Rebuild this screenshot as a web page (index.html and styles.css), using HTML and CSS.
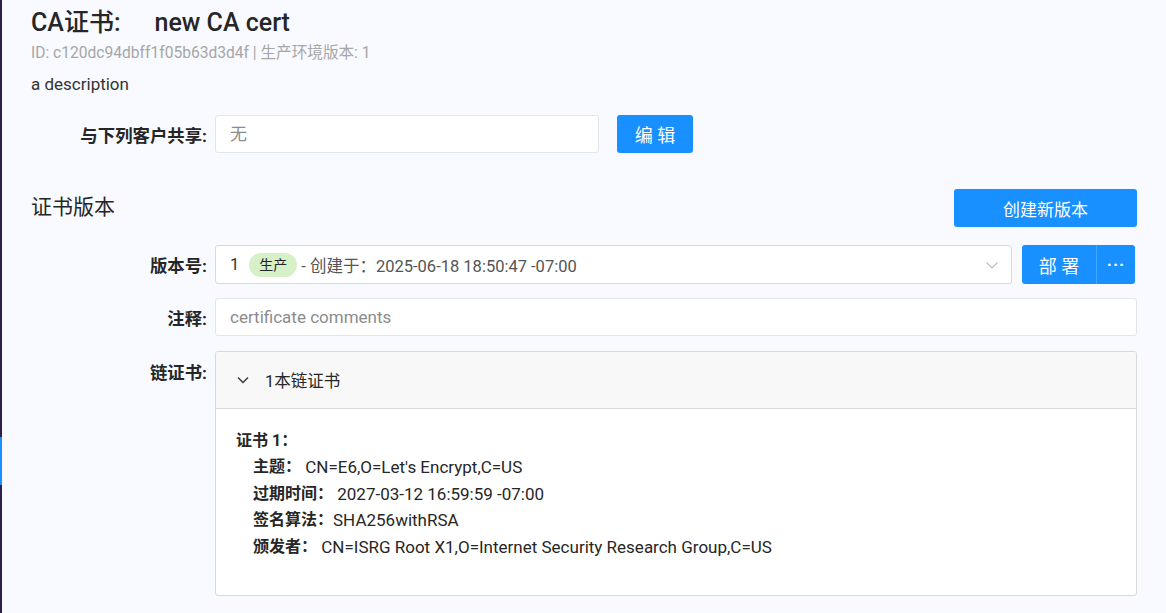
FILE: index.html
```html
<!DOCTYPE html>
<html lang="zh">
<head>
<meta charset="utf-8">
<link rel="stylesheet" href="styles.css">
</head>
<body>
<div class="app">
  <div class="rail">
    <div class="rail-gap"></div>
    <div class="rail-active"></div>
  </div>
  <main class="main">
    <h1 class="title">CA证书:<span class="title-name">new CA cert</span></h1>
    <div class="meta">ID: c120dc94dbff1f05b63d3d4f | 生产环境版本: 1</div>
    <div class="desc">a description</div>

    <div class="row row-share">
      <label class="label">与下列客户共享:</label>
      <div class="input share-input">无</div>
      <button class="btn btn-edit">编 辑</button>
    </div>

    <div class="section-head">
      <h2 class="section-title">证书版本</h2>
      <button class="btn btn-create">创建新版本</button>
    </div>

    <div class="row row-version">
      <label class="label">版本号:</label>
      <div class="select">
        <span class="ver">1</span>
        <span class="tag">生产</span>
        <span class="ver-text">- 创建于：2025-06-18 18:50:47 -07:00</span>
        <svg class="select-arrow" width="14" height="14" viewBox="0 0 14 14"><path d="M1.5 4.5 L7 10 L12.5 4.5" fill="none" stroke="#bfbfbf" stroke-width="1.2"/></svg>
      </div>
      <div class="btn-group">
        <button class="btn btn-deploy">部 署</button>
        <button class="btn btn-more">···</button>
      </div>
    </div>

    <div class="row row-comment">
      <label class="label">注释:</label>
      <div class="input comment-input">certificate comments</div>
    </div>

    <div class="row row-chain">
      <label class="label label-top">链证书:</label>
      <div class="panel">
        <div class="panel-head">
          <svg class="panel-arrow" width="12" height="12" viewBox="0 0 12 12"><path d="M1 3.5 L6 8.5 L11 3.5" fill="none" stroke="#333" stroke-width="1.3"/></svg>
          <span>1本链证书</span>
        </div>
        <div class="panel-body">
          <div class="cert-title">证书 1：</div>
          <div class="cert-line"><b>主题：</b> CN=E6,O=Let's Encrypt,C=US</div>
          <div class="cert-line"><b>过期时间：</b> 2027-03-12 16:59:59 -07:00</div>
          <div class="cert-line"><b>签名算法：</b>SHA256withRSA</div>
          <div class="cert-line"><b>颁发者：</b> CN=ISRG Root X1,O=Internet Security Research Group,C=US</div>
        </div>
      </div>
    </div>
  </main>
</div>
</body>
</html>
```

FILE: styles.css
```css
* { box-sizing: border-box; }
html, body { margin: 0; padding: 0; }
body {
  background: #f8faff;
  font-family: Roboto, "Noto Sans CJK SC", sans-serif;
  color: #333;
  width: 1166px;
  height: 613px;
  overflow: hidden;
}
.app { display: flex; height: 613px; }
.rail {
  width: 2px;
  flex: none;
  background: #2d2049;
  display: flex;
  flex-direction: column;
}
.rail-gap { height: 437px; }
.rail-active { height: 48px; background: #1890ff; }

.main {
  flex: 1;
  padding: 6px 29px 0 29px;
}
.title {
  margin: 0;
  font-size: 25px;
  font-weight: 500;
  line-height: 34px;
  color: #262626;
}
.title-name { margin-left: 34px; }
.meta {
  margin-top: 2px;
  font-size: 15.6px;
  line-height: 22px;
  color: #a6a6a6;
}
.desc {
  margin-top: 9px;
  font-size: 17px;
  line-height: 22px;
  color: #333;
}

.row { display: flex; align-items: center; }
.label {
  width: 184px;
  flex: none;
  text-align: right;
  padding-right: 8px;
  font-size: 17.4px;
  font-weight: 700;
  color: #262626;
}
.input {
  background: #fff;
  border: 1px solid #e3e5ea;
  border-radius: 3px;
  height: 38px;
  line-height: 36px;
  padding: 0 14px;
  font-size: 17px;
  color: #8c8c8c;
}
.row-share { margin-top: 20px; }
.share-input { width: 384px; }

.btn {
  font-family: Roboto, "Noto Sans CJK SC", sans-serif;
  background: #1890ff;
  color: #fff;
  border: none;
  border-radius: 3px;
  font-size: 18px;
  cursor: pointer;
}
.btn-edit {
  margin-left: 18px;
  width: 76px;
  height: 38px;
}

.section-head {
  display: flex;
  justify-content: space-between;
  align-items: center;
  margin-top: 36px;
}
.section-title {
  margin: 0 0 6px 0;
  font-size: 21px;
  font-weight: 400;
  color: #262626;
}
.btn-create {
  width: 183px;
  height: 38px;
  font-size: 17px;
}

.row-version { margin-top: 18px; }
.select {
  width: 797px;
  height: 39px;
  background: #fff;
  border: 1px solid #d9d9d9;
  border-radius: 3px;
  display: flex;
  align-items: center;
  padding: 0 0 0 14px;
  font-size: 16.5px;
  color: #555;
}
.ver { color: #333; }
.tag {
  margin-left: 10px;
  background: #d6f0c8;
  border-radius: 12px;
  height: 24px;
  line-height: 24px;
  padding: 0 10px;
  font-size: 14px;
  color: #262626;
}
.ver-text { margin-left: 4px; }
.select-arrow { margin-left: auto; margin-right: 12px; }

.btn-group {
  margin-left: 10px;
  display: flex;
  height: 39px;
}
.btn-deploy {
  width: 75px;
  height: 39px;
  border-radius: 3px 0 0 3px;
  font-size: 18px;
  border-right: 1px solid #40a9ff;
}
.btn-more {
  width: 38px;
  height: 39px;
  border-radius: 0 3px 3px 0;
  font-size: 17px;
  font-weight: 700;
  letter-spacing: 1px;
}

.row-comment { margin-top: 14px; }
.comment-input { flex: 1; }

.row-chain { margin-top: 15px; align-items: flex-start; }
.label-top { padding-top: 8px; }
.panel {
  flex: 1;
  border: 1px solid #d9d9d9;
  border-radius: 3px;
  background: #fff;
  height: 245px;
  overflow: hidden;
}
.panel-head {
  height: 57px;
  background: #f8f8f8;
  border-bottom: 1px solid #d9d9d9;
  display: flex;
  align-items: center;
  padding-left: 21px;
  font-size: 16.5px;
  color: #262626;
}
.panel-arrow { margin-right: 16px; }
.panel-body {
  padding: 19px 20px 0 20px;
  font-size: 17px;
  color: #262626;
}
.cert-title {
  font-weight: 700;
  font-size: 16px;
  height: 26px;
  line-height: 26px;
}
.cert-line {
  padding-left: 17px;
  height: 26.5px;
  line-height: 26.5px;
}
.cert-line b { font-weight: 700; font-size: 16px; vertical-align: top; }
```
